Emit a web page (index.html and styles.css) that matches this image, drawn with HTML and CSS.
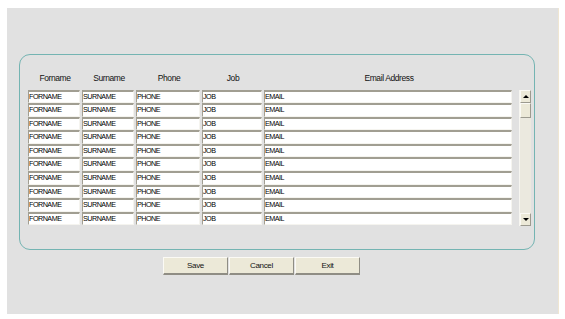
FILE: index.html
```html
<!DOCTYPE html>
<html>
<head>
<meta charset="utf-8">
<link rel="stylesheet" href="styles.css">
</head>
<body>
<div class="window">
  <div class="panel">
    <div class="table-wrap">
      <div class="grid">
        <div class="hd">Forname</div>
        <div class="hd">Surname</div>
        <div class="hd">Phone</div>
        <div class="hd">Job</div>
        <div class="hd">Email Address</div>

        <div class="cell">FORNAME</div><div class="cell">SURNAME</div><div class="cell">PHONE</div><div class="cell">JOB</div><div class="cell">EMAIL</div>
        <div class="cell">FORNAME</div><div class="cell">SURNAME</div><div class="cell">PHONE</div><div class="cell">JOB</div><div class="cell">EMAIL</div>
        <div class="cell">FORNAME</div><div class="cell">SURNAME</div><div class="cell">PHONE</div><div class="cell">JOB</div><div class="cell">EMAIL</div>
        <div class="cell">FORNAME</div><div class="cell">SURNAME</div><div class="cell">PHONE</div><div class="cell">JOB</div><div class="cell">EMAIL</div>
        <div class="cell">FORNAME</div><div class="cell">SURNAME</div><div class="cell">PHONE</div><div class="cell">JOB</div><div class="cell">EMAIL</div>
        <div class="cell">FORNAME</div><div class="cell">SURNAME</div><div class="cell">PHONE</div><div class="cell">JOB</div><div class="cell">EMAIL</div>
        <div class="cell">FORNAME</div><div class="cell">SURNAME</div><div class="cell">PHONE</div><div class="cell">JOB</div><div class="cell">EMAIL</div>
        <div class="cell">FORNAME</div><div class="cell">SURNAME</div><div class="cell">PHONE</div><div class="cell">JOB</div><div class="cell">EMAIL</div>
        <div class="cell">FORNAME</div><div class="cell">SURNAME</div><div class="cell">PHONE</div><div class="cell">JOB</div><div class="cell">EMAIL</div>
        <div class="cell">FORNAME</div><div class="cell">SURNAME</div><div class="cell">PHONE</div><div class="cell">JOB</div><div class="cell">EMAIL</div>
      </div>
      <div class="scrollbar">
        <div class="sb-btn"><span class="arrow up"></span></div>
        <div class="sb-thumb"></div>
        <div class="sb-track"></div>
        <div class="sb-btn"><span class="arrow down"></span></div>
      </div>
    </div>
  </div>
  <div class="buttons">
    <div class="btn">Save</div>
    <div class="btn">Cancel</div>
    <div class="btn">Exit</div>
  </div>
</div>
</body>
</html>
```

FILE: styles.css
```css
html, body {
  margin: 0;
  padding: 0;
  background: #ffffff;
}
body {
  padding: 8px 0 0 7px;
  font-family: "Liberation Sans", Arial, sans-serif;
}
.window {
  width: 552px;
  height: 306px;
  background: #e1e1e1;
  box-sizing: border-box;
  padding-top: 46px;
  padding-left: 12px;
  border-right: 1px solid #efe6d2;
}
.panel {
  width: 516px;
  height: 196px;
  box-sizing: border-box;
  border: 1px solid #74b4b2;
  border-radius: 11px;
  padding: 15px 0 0 8px;
}
.table-wrap {
  display: flex;
  align-items: flex-start;
}
.grid {
  display: grid;
  grid-template-columns: 52px 52px 64px 60px 248px;
  grid-template-rows: 19.5px;
  grid-auto-rows: 13.6px;
  column-gap: 2px;
}
.hd {
  font-size: 8.5px;
  letter-spacing: -0.4px;
  color: #111;
  text-align: center;
  line-height: 12px;
  padding-top: 2px;
  padding-left: 2px;
}
.cell {
  background: #ffffff;
  box-sizing: border-box;
  border-top: 2px solid #a19e92;
  border-left: 1px solid #a19e92;
  border-right: 1px solid #f5f4ef;
  border-bottom: 1px solid #f5f4ef;
  font-size: 7.2px;
  letter-spacing: -0.5px;
  color: #000;
  line-height: 10px;
  padding-left: 0;
  white-space: nowrap;
  overflow: hidden;
}
.scrollbar {
  margin-top: 20px;
  margin-left: 7px;
  width: 12px;
  height: 136px;
  display: flex;
  flex-direction: column;
  background: #ebe9df;
  border-left: 1px solid #f7f6f1;
  box-sizing: border-box;
}
.sb-btn, .sb-thumb {
  height: 13px;
  flex: none;
  background: #ece9d8;
  box-sizing: border-box;
  border-top: 1px solid #fbfaf5;
  border-left: 1px solid #fbfaf5;
  border-right: 1px solid #9c9a8f;
  border-bottom: 1px solid #9c9a8f;
  display: flex;
  align-items: center;
  justify-content: center;
}
.sb-thumb {
  height: 15px;
}
.sb-track {
  flex: 1;
}
.arrow {
  width: 0;
  height: 0;
  border-left: 3px solid transparent;
  border-right: 3px solid transparent;
}
.arrow.up {
  border-bottom: 3px solid #000;
}
.arrow.down {
  border-top: 3px solid #000;
}
.buttons {
  display: flex;
  gap: 1px;
  margin-top: 7px;
  padding-left: 144px;
}
.btn {
  width: 65px;
  height: 18px;
  box-sizing: border-box;
  background: #ece9d8;
  border-top: 1px solid #fbfaf5;
  border-left: 1px solid #fbfaf5;
  border-right: 1px solid #8f8d84;
  border-bottom: 2px solid #8f8d84;
  font-size: 8px;
  letter-spacing: -0.35px;
  color: #111;
  text-align: center;
  line-height: 15px;
}
```
